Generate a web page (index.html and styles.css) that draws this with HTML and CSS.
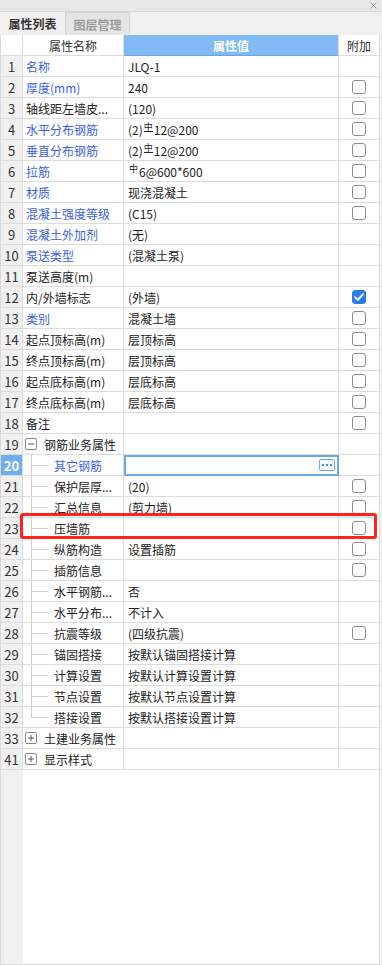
FILE: index.html
```html
<!DOCTYPE html>
<html lang="zh-CN">
<head>
<meta charset="utf-8">
<title>属性列表</title>
<link rel="stylesheet" href="styles.css">
</head>
<body>
<div class="topbar">
  <svg class="close" width="7" height="7" viewBox="0 0 7 7"><path d="M0.5 0.5L6.5 6.5M6.5 0.5L0.5 6.5" stroke="#a0a0a0" stroke-width="1"/></svg>
</div>
<div class="tabs">
  <div class="tab active">属性列表</div>
  <div class="tab inactive">图层管理</div>
</div>
<div class="sheet">
  <div class="row head">
    <div class="c num hnum"></div>
    <div class="c name center">属性名称</div>
    <div class="c val hval center">属性值</div>
    <div class="c add">附加</div>
  </div>
  <div class="row"><div class="c num">1</div><div class="c name blue">名称</div><div class="c val">JLQ-1</div><div class="c add"></div></div>
  <div class="row"><div class="c num">2</div><div class="c name blue">厚度(mm)</div><div class="c val">240</div><div class="c add"><span class="cb"></span></div></div>
  <div class="row"><div class="c num">3</div><div class="c name">轴线距左墙皮...</div><div class="c val">(120)</div><div class="c add"><span class="cb"></span></div></div>
  <div class="row"><div class="c num">4</div><div class="c name blue">水平分布钢筋</div><div class="c val">(2)<span class="rb3">中</span>12@200</div><div class="c add"><span class="cb"></span></div></div>
  <div class="row"><div class="c num">5</div><div class="c name blue">垂直分布钢筋</div><div class="c val">(2)<span class="rb3">中</span>12@200</div><div class="c add"><span class="cb"></span></div></div>
  <div class="row"><div class="c num">6</div><div class="c name blue">拉筋</div><div class="c val"><span class="rb1">中</span>6@600*600</div><div class="c add"><span class="cb"></span></div></div>
  <div class="row"><div class="c num">7</div><div class="c name blue">材质</div><div class="c val">现浇混凝土</div><div class="c add"><span class="cb"></span></div></div>
  <div class="row"><div class="c num">8</div><div class="c name blue">混凝土强度等级</div><div class="c val">(C15)</div><div class="c add"><span class="cb"></span></div></div>
  <div class="row"><div class="c num">9</div><div class="c name blue">混凝土外加剂</div><div class="c val">(无)</div><div class="c add"></div></div>
  <div class="row"><div class="c num">10</div><div class="c name blue">泵送类型</div><div class="c val">(混凝土泵)</div><div class="c add"></div></div>
  <div class="row"><div class="c num">11</div><div class="c name">泵送高度(m)</div><div class="c val"></div><div class="c add"></div></div>
  <div class="row"><div class="c num">12</div><div class="c name">内/外墙标志</div><div class="c val">(外墙)</div><div class="c add"><span class="cb on"><svg width="10" height="8" viewBox="0 0 10 8"><path d="M1 4.2L3.8 6.8L9 1.2" fill="none" stroke="#fff" stroke-width="1.8" stroke-linecap="round" stroke-linejoin="round"/></svg></span></div></div>
  <div class="row"><div class="c num">13</div><div class="c name blue">类别</div><div class="c val">混凝土墙</div><div class="c add"><span class="cb"></span></div></div>
  <div class="row"><div class="c num">14</div><div class="c name">起点顶标高(m)</div><div class="c val">层顶标高</div><div class="c add"><span class="cb"></span></div></div>
  <div class="row"><div class="c num">15</div><div class="c name">终点顶标高(m)</div><div class="c val">层顶标高</div><div class="c add"><span class="cb"></span></div></div>
  <div class="row"><div class="c num">16</div><div class="c name">起点底标高(m)</div><div class="c val">层底标高</div><div class="c add"><span class="cb"></span></div></div>
  <div class="row"><div class="c num">17</div><div class="c name">终点底标高(m)</div><div class="c val">层底标高</div><div class="c add"><span class="cb"></span></div></div>
  <div class="row"><div class="c num">18</div><div class="c name">备注</div><div class="c val"></div><div class="c add"><span class="cb"></span></div></div>
  <div class="row"><div class="c num">19</div><div class="c name"><span class="tg"><svg width="10" height="10" viewBox="0 0 10 10"><path d="M2 5H8" stroke="#555" stroke-width="1"/></svg></span><span class="gtext">钢筋业务属性</span></div><div class="c val"></div><div class="c add"></div></div>
  <div class="row"><div class="c num sel">20</div><div class="c name"><span class="branch"></span><span class="ctext blue">其它钢筋</span></div><div class="c val sel"><span class="more"><i></i><i></i><i></i></span></div><div class="c add"></div></div>
  <div class="row"><div class="c num">21</div><div class="c name"><span class="branch"></span><span class="ctext">保护层厚...</span></div><div class="c val">(20)</div><div class="c add"><span class="cb"></span></div></div>
  <div class="row"><div class="c num">22</div><div class="c name"><span class="branch"></span><span class="ctext">汇总信息</span></div><div class="c val">(剪力墙)</div><div class="c add"><span class="cb"></span></div></div>
  <div class="row"><div class="c num">23</div><div class="c name"><span class="branch"></span><span class="ctext">压墙筋</span></div><div class="c val"></div><div class="c add"><span class="cb"></span></div></div>
  <div class="row"><div class="c num">24</div><div class="c name"><span class="branch"></span><span class="ctext">纵筋构造</span></div><div class="c val">设置插筋</div><div class="c add"><span class="cb"></span></div></div>
  <div class="row"><div class="c num">25</div><div class="c name"><span class="branch"></span><span class="ctext">插筋信息</span></div><div class="c val"></div><div class="c add"><span class="cb"></span></div></div>
  <div class="row"><div class="c num">26</div><div class="c name"><span class="branch"></span><span class="ctext">水平钢筋...</span></div><div class="c val">否</div><div class="c add"></div></div>
  <div class="row"><div class="c num">27</div><div class="c name"><span class="branch"></span><span class="ctext">水平分布...</span></div><div class="c val">不计入</div><div class="c add"></div></div>
  <div class="row"><div class="c num">28</div><div class="c name"><span class="branch"></span><span class="ctext">抗震等级</span></div><div class="c val">(四级抗震)</div><div class="c add"><span class="cb"></span></div></div>
  <div class="row"><div class="c num">29</div><div class="c name"><span class="branch"></span><span class="ctext">锚固搭接</span></div><div class="c val">按默认锚固搭接计算</div><div class="c add"></div></div>
  <div class="row"><div class="c num">30</div><div class="c name"><span class="branch"></span><span class="ctext">计算设置</span></div><div class="c val">按默认计算设置计算</div><div class="c add"></div></div>
  <div class="row"><div class="c num">31</div><div class="c name"><span class="branch"></span><span class="ctext">节点设置</span></div><div class="c val">按默认节点设置计算</div><div class="c add"></div></div>
  <div class="row"><div class="c num">32</div><div class="c name"><span class="branch last"></span><span class="ctext">搭接设置</span></div><div class="c val">按默认搭接设置计算</div><div class="c add"></div></div>
  <div class="row"><div class="c num">33</div><div class="c name"><span class="tg"><svg width="10" height="10" viewBox="0 0 10 10"><path d="M2 5H8M5 2V8" stroke="#555" stroke-width="1"/></svg></span><span class="gtext">土建业务属性</span></div><div class="c val"></div><div class="c add"></div></div>
  <div class="row"><div class="c num">41</div><div class="c name"><span class="tg"><svg width="10" height="10" viewBox="0 0 10 10"><path d="M2 5H8M5 2V8" stroke="#555" stroke-width="1"/></svg></span><span class="gtext">显示样式</span></div><div class="c val"></div><div class="c add"></div></div>
  <div class="filler"><div class="fg"></div><div class="fw"></div></div>
  <div class="mark"></div>
</div>
</body>
</html>
```
FILE: styles.css
```css
body {
  margin: 0;
  width: 382px;
  background: #f0f0f0;
  font-family: "Noto Sans CJK SC", "Microsoft YaHei", sans-serif;
  font-size: 12px;
  color: #222;
}

.topbar {
  height: 11px;
  background: #e8e8e8;
  border-bottom: 1px solid #d6d6d6;
  display: flex;
  justify-content: flex-end;
  align-items: center;
  padding-right: 5px;
}

.close {
  display: block;
}

.tabs {
  height: 23px;
  display: flex;
  background: #f0f0f0;
}

.tab {
  width: 65px;
  box-sizing: border-box;
  display: flex;
  align-items: center;
  justify-content: center;
  font-weight: bold;
  font-size: 12px;
}

.tab.active {
  color: #333;
}

.tab.inactive {
  color: #9c9c9c;
  background: #e5e5e5;
  border: 1px solid #d4d4d4;
  border-bottom: none;
}

.sheet {
  position: relative;
  width: 380px;
  box-sizing: border-box;
  border-left: 1px solid #d9d9d9;
  background: #fff;
}

.row {
  display: grid;
  grid-template-columns: 22px 101px 215px 41px;
  height: 21px;
}

.c {
  box-sizing: border-box;
  border-right: 1px solid #dcdcdc;
  border-bottom: 1px solid #dcdcdc;
  display: flex;
  align-items: center;
  overflow: hidden;
  white-space: nowrap;
  min-width: 0;
}

.num {
  justify-content: center;
  background: #f0f0f0;
  font-size: 13px;
  color: #333;
}

.hnum {
  background: #fff;
}

.name {
  padding-left: 3px;
}

.val {
  padding-left: 4px;
}

.center {
  justify-content: center;
  padding-left: 0;
}

.add {
  justify-content: center;
}

.head .c {
  color: #333;
}

.head .hval {
  background: #80bbf6;
  border-bottom-color: #6aa6e6;
  color: #fff;
  font-weight: bold;
}

.blue {
  color: #3a5fe5;
}

.rb1,
.rb3 {
  display: inline-block;
  font-size: 9px;
  line-height: 8px;
  margin: 0 1px;
  position: relative;
  top: -2px;
}

.rb3 {
  border-bottom: 1px solid #222;
}

.cb {
  width: 14px;
  height: 14px;
  box-sizing: border-box;
  border: 1px solid #8c8c8c;
  border-radius: 3px;
  background: #fff;
  display: flex;
  align-items: center;
  justify-content: center;
}

.cb.on {
  background: #2b7de9;
  border-color: #2b7de9;
}

.cb svg {
  display: block;
}

.tg {
  flex: none;
  width: 12px;
  height: 12px;
  box-sizing: border-box;
  border: 1px solid #8a8a8a;
  border-radius: 2px;
  margin-left: -1px;
  display: flex;
  align-items: center;
  justify-content: center;
}

.tg svg {
  display: block;
}

.gtext {
  margin-left: 7px;
}

.branch {
  flex: none;
  align-self: stretch;
  width: 17px;
  margin-left: 5px;
  box-sizing: border-box;
  border-left: 1px solid #cfcfcf;
  background: linear-gradient(#cfcfcf, #cfcfcf) no-repeat left center / 100% 1px;
}

.branch.last {
  border-left: none;
  background:
    linear-gradient(#cfcfcf, #cfcfcf) no-repeat 0 0 / 1px 50%,
    linear-gradient(#cfcfcf, #cfcfcf) no-repeat 0 50% / 100% 1px;
}

.ctext {
  margin-left: 6px;
}

.num.sel {
  background: #6eaef0;
  color: #fff;
  font-weight: bold;
}

.val.sel {
  outline: 2px solid #6aa8e8;
  outline-offset: -2px;
  justify-content: flex-end;
  padding-right: 3px;
}

.more {
  width: 16px;
  height: 12px;
  box-sizing: border-box;
  border: 1px solid #6aa8e8;
  border-radius: 2px;
  background: #f3f8fe;
  display: flex;
  align-items: center;
  justify-content: center;
  gap: 2px;
}

.more i {
  width: 2px;
  height: 2px;
  background: #3f8be0;
}

.filler {
  display: grid;
  grid-template-columns: 22px 1fr;
  height: 195px;
  box-sizing: border-box;
  border-bottom: 1px solid #d9d9d9;
}

.fg {
  background: #f0f0f0;
}

.fw {
  background: #fff;
  border-right: 1px solid #dcdcdc;
}

.mark {
  position: absolute;
  left: 19px;
  top: 478px;
  width: 357px;
  height: 26px;
  box-sizing: border-box;
  border: 3px solid #ff2419;
  border-radius: 3px;
  pointer-events: none;
}
```
